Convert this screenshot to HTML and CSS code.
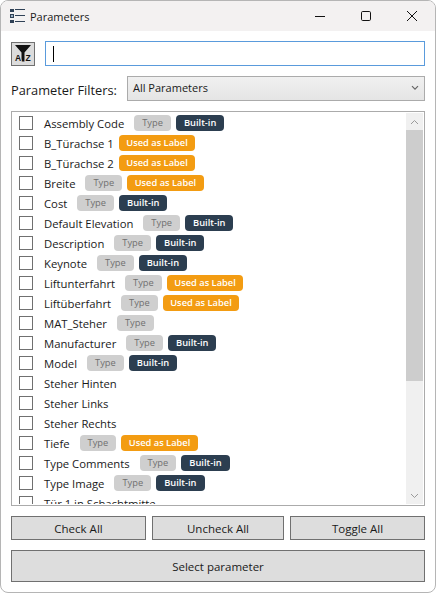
FILE: index.html
```html
<!DOCTYPE html>
<html lang="en">
<head>
<meta charset="utf-8">
<title>Parameters</title>
<link rel="stylesheet" href="styles.css">
</head>
<body>
<div class="window">
  <header class="titlebar">
    <svg class="app-icon" width="16" height="16" viewBox="0 0 16 16" aria-hidden="true">
      <g fill="#2f4156"><rect x="0" y="1" width="4" height="3"/><rect x="0" y="6" width="4" height="4"/><rect x="0" y="12" width="4" height="3"/>
      <rect x="5" y="1" width="10" height="1"/><rect x="5" y="7" width="10" height="1"/><rect x="5" y="13" width="10" height="1"/></g>
      <rect x="1" y="7" width="2" height="2" fill="#9fb2c4"/>
    </svg>
    <span class="title">Parameters</span>
    <div class="controls">
      <svg class="ctl" width="12" height="12" viewBox="0 0 12 12"><path d="M1 6.5h10" stroke="#111" stroke-width="1" fill="none"/></svg>
      <svg class="ctl" width="12" height="12" viewBox="0 0 12 12"><rect x="1.5" y="1.5" width="9" height="9" rx="1.2" stroke="#111" stroke-width="1" fill="none"/></svg>
      <svg class="ctl" width="12" height="12" viewBox="0 0 12 12"><path d="M1 1l10 10M11 1L1 11" stroke="#111" stroke-width="1" fill="none"/></svg>
    </div>
  </header>
  <main class="content">
    <div class="search-row">
      <button class="filter-btn" aria-label="Sort filter">
        <svg width="22" height="22" viewBox="0 0 22 22" aria-hidden="true">
          <path d="M3 2h16l-6.5 7.5v9h-3v-9z" fill="#111"/>
          <text x="3" y="18" class="az">A</text><text x="13.5" y="18" class="az">Z</text>
        </svg>
      </button>
      <div class="search"><span class="caret"></span></div>
    </div>
    <div class="filter-row">
      <span class="filter-label">Parameter Filters:</span>
      <div class="combo"><span>All Parameters</span>
        <svg width="8" height="6" viewBox="0 0 8 6"><path d="M1 1.2l3 3 3-3" stroke="#666" stroke-width="1.2" fill="none"/></svg>
      </div>
    </div>
    <div class="list">
      <div class="rows">
        <div class="row"><i class="check"></i><span class="name">Assembly Code</span><span class="pill type">Type</span><span class="pill builtin">Built-in</span></div>
        <div class="row"><i class="check"></i><span class="name">B_Türachse 1</span><span class="pill label">Used as Label</span></div>
        <div class="row"><i class="check"></i><span class="name">B_Türachse 2</span><span class="pill label">Used as Label</span></div>
        <div class="row"><i class="check"></i><span class="name">Breite</span><span class="pill type">Type</span><span class="pill label">Used as Label</span></div>
        <div class="row"><i class="check"></i><span class="name">Cost</span><span class="pill type">Type</span><span class="pill builtin">Built-in</span></div>
        <div class="row"><i class="check"></i><span class="name">Default Elevation</span><span class="pill type">Type</span><span class="pill builtin">Built-in</span></div>
        <div class="row"><i class="check"></i><span class="name">Description</span><span class="pill type">Type</span><span class="pill builtin">Built-in</span></div>
        <div class="row"><i class="check"></i><span class="name">Keynote</span><span class="pill type">Type</span><span class="pill builtin">Built-in</span></div>
        <div class="row"><i class="check"></i><span class="name">Liftunterfahrt</span><span class="pill type">Type</span><span class="pill label">Used as Label</span></div>
        <div class="row"><i class="check"></i><span class="name">Liftüberfahrt</span><span class="pill type">Type</span><span class="pill label">Used as Label</span></div>
        <div class="row"><i class="check"></i><span class="name">MAT_Steher</span><span class="pill type">Type</span></div>
        <div class="row"><i class="check"></i><span class="name">Manufacturer</span><span class="pill type">Type</span><span class="pill builtin">Built-in</span></div>
        <div class="row"><i class="check"></i><span class="name">Model</span><span class="pill type">Type</span><span class="pill builtin">Built-in</span></div>
        <div class="row"><i class="check"></i><span class="name">Steher Hinten</span></div>
        <div class="row"><i class="check"></i><span class="name">Steher Links</span></div>
        <div class="row"><i class="check"></i><span class="name">Steher Rechts</span></div>
        <div class="row"><i class="check"></i><span class="name">Tiefe</span><span class="pill type">Type</span><span class="pill label">Used as Label</span></div>
        <div class="row"><i class="check"></i><span class="name">Type Comments</span><span class="pill type">Type</span><span class="pill builtin">Built-in</span></div>
        <div class="row"><i class="check"></i><span class="name">Type Image</span><span class="pill type">Type</span><span class="pill builtin">Built-in</span></div>
        <div class="row"><i class="check"></i><span class="name">Tür 1 in Schachtmitte</span></div>
      </div>
      <div class="scrollbar">
        <div class="arrow"><svg width="9" height="6" viewBox="0 0 9 6"><path d="M1 5l3.5-3.5L8 5" stroke="#9a9a9a" stroke-width="1" fill="none"/></svg></div>
        <div class="thumb"></div>
        <div class="track"></div>
        <div class="arrow"><svg width="9" height="6" viewBox="0 0 9 6"><path d="M1 1l3.5 3.5L8 1" stroke="#9a9a9a" stroke-width="1" fill="none"/></svg></div>
      </div>
    </div>
    <div class="actions">
      <button class="btn">Check All</button>
      <button class="btn">Uncheck All</button>
      <button class="btn">Toggle All</button>
    </div>
    <button class="btn primary">Select parameter</button>
  </main>
</div>
</body>
</html>
```
FILE: styles.css
```css
* { box-sizing: border-box; }
html, body { margin: 0; height: 100%; background: #fff; }
body { font-family: "Open Sans", "Noto Sans", sans-serif; font-size: 12px; color: #1a1a1a; }
.window { width: 436px; height: 593px; border: 1px solid #b5b5b5; border-radius: 8px; overflow: hidden; display: flex; flex-direction: column; background: #fff; }
.titlebar { height: 30px; flex: none; background: #f3f1f1; display: flex; align-items: center; padding-left: 9px; }
.app-icon { flex: none; }
.title { margin-left: 4px; font-size: 11px; color: #1a1a1a; }
.controls { margin-left: auto; display: flex; }
.ctl { margin-right: 17px; margin-left: 17px; }
.content { flex: 1; padding: 10px 10px 10px; display: flex; flex-direction: column; }
.search-row { display: flex; align-items: center; gap: 10px; height: 25px; }
.filter-btn { width: 24px; height: 24px; flex: none; padding: 0; border: 1px solid #707070; background: #dcdcdc; display: flex; align-items: center; justify-content: center; }
.az { font: 700 8.5px "Liberation Sans", sans-serif; fill: #111; stroke: #dcdcdc; stroke-width: 1.5px; paint-order: stroke; }
.search { flex: 1; height: 25px; border: 1px solid #5a9bdc; display: flex; align-items: center; padding-left: 7px; }
.caret { width: 1px; height: 16px; background: #000; }
.filter-row { display: flex; align-items: center; margin-top: 10px; height: 25px; }
.filter-label { width: 116px; flex: none; font-size: 12.8px; padding-top: 2px; white-space: nowrap; }
.combo { flex: 1; height: 25px; border: 1px solid #ababab; background: linear-gradient(#f0f0f0, #e5e5e5); display: flex; align-items: center; justify-content: space-between; padding: 0 5px 2px 5px; font-size: 11px; }
.list { margin-top: 10px; height: 395px; flex: none; border: 1px solid #ababab; display: flex; padding: 1px; overflow: hidden; }
.rows { flex: 1; overflow: hidden; padding-left: 6px; }
.row { height: 20px; display: flex; align-items: center; }
.check { width: 14px; height: 14px; flex: none; border: 1px solid #707070; background: #fff; margin-right: 11px; }
.name { white-space: nowrap; font-size: 11.3px; margin-right: 5px; }
.pill { height: 16px; border-radius: 4px; font-size: 9.3px; display: flex; align-items: center; padding: 0 8px; margin-right: 5px; white-space: nowrap; margin-top: -1px; }
.pill.type { background: #cfcfcf; color: #707070; margin-left: 5px; }
.pill.builtin { background: #2c3e50; color: #fff; font-weight: 600; }
.pill.label { background: #f39c12; color: #fff; font-weight: 600; padding: 0 7.5px; }
.scrollbar { width: 17px; flex: none; display: flex; flex-direction: column; background: #f0f0f0; }
.arrow { height: 17px; flex: none; display: flex; align-items: center; justify-content: center; }
.thumb { height: 251px; flex: none; background: #cdcdcd; }
.track { flex: 1; }
.actions { display: grid; grid-template-columns: 135px 132px 135px; gap: 6px; margin-top: 10px; }
.btn { height: 24px; border: 1px solid #707070; background: #dddddd; font: 11.5px "Open Sans", "Noto Sans", sans-serif; color: #1a1a1a; padding: 0; }
.btn.primary { height: 32px; margin-top: 10px; width: 100%; }
```
